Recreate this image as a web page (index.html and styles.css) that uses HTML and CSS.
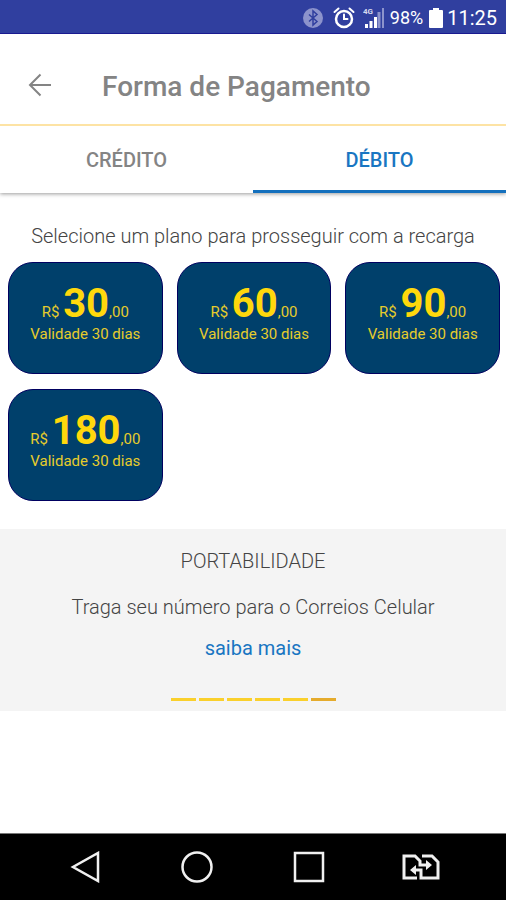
FILE: index.html
```html
<!DOCTYPE html>
<html lang="pt-BR">
<head>
    <meta charset="UTF-8">
    <meta name="viewport" content="width=device-width, initial-scale=1.0">
    <title>Forma de Pagamento</title>
    <link rel="stylesheet" href="styles.css">
</head>
<body>
    <div class="status-bar">
        <svg class="status-bt" width="22" height="22" viewBox="0 0 22 22">
            <circle cx="11" cy="11" r="10" fill="#8c93cc"/>
            <path d="M7 7.5l8 7-4 3.5V4l4 3.5-8 7" fill="none" stroke="#303f9f" stroke-width="1.5"/>
        </svg>
        <svg class="status-alarm" width="22" height="22" viewBox="0 0 22 22" fill="none" stroke="#fff" stroke-width="2.5" stroke-linecap="round">
            <circle cx="11" cy="12" r="8"/>
            <path d="M1.5 5l4-3.5M20.5 5l-4-3.5M11 7.5V12h3.5" stroke-width="2"/>
        </svg>
        <svg class="status-signal" width="22" height="22" viewBox="0 0 22 22">
            <text class="signal-text" x="0" y="7">4G</text>
            <path d="M2 17h3v4H2zM6.500 14h3v7h-3zM11 10h3v11h-3z" fill="#fff"/>
            <path d="M14.500 5h3v16h-3zM19 1h2v20h-2z" fill="#8c93cc"/>
        </svg>
        <span class="battery-level">98%</span>
        <svg class="status-battery" width="14" height="20" viewBox="0 0 14 20" fill="#fff">
            <path d="M4 0h6v2h3q1 0 1 1v16q0 1-1 1H1q-1 0-1-1V3q0-1 1-1h3z"/>
        </svg>
        <span class="clock">11:25</span>
    </div>

    <header class="header">
        <button class="back-btn" aria-label="Voltar">
            <svg width="24" height="24" viewBox="0 0 24 24" fill="none" stroke="#848484" stroke-width="2">
                <path d="M23 12H2M12.500 1.500L2 12l10.500 10.500"/>
            </svg>
        </button>
        <h1>Forma de Pagamento</h1>
    </header>

    <nav class="tabs">
        <button class="tab">CRÉDITO</button>
        <button class="tab active">DÉBITO</button>
    </nav>

    <main class="content">
        <p class="intro">Selecione um plano para prosseguir com a recarga</p>
        <div class="plans">
            <button class="plan">
                <span class="price">R$ <b>30</b>,00</span>
                <span class="validity">Validade 30 dias</span>
            </button>
            <button class="plan">
                <span class="price">R$ <b>60</b>,00</span>
                <span class="validity">Validade 30 dias</span>
            </button>
            <button class="plan">
                <span class="price">R$ <b>90</b>,00</span>
                <span class="validity">Validade 30 dias</span>
            </button>
            <button class="plan">
                <span class="price">R$ <b>180</b>,00</span>
                <span class="validity">Validade 30 dias</span>
            </button>
        </div>

        <section class="banner">
            <h2>PORTABILIDADE</h2>
            <p>Traga seu número para o Correios Celular</p>
            <a href="#">saiba mais</a>
            <div class="pager">
                <span></span>
                <span></span>
                <span></span>
                <span></span>
                <span></span>
                <span class="current"></span>
            </div>
        </section>
    </main>

    <footer class="nav-bar">
        <button class="nav-btn" aria-label="Voltar">
            <svg width="32" height="32" viewBox="0 0 32 32"><path d="M29 2v28L4 16z"/></svg>
        </button>
        <button class="nav-btn" aria-label="Início">
            <svg width="32" height="32" viewBox="0 0 32 32"><circle cx="16" cy="16" r="14.500"/></svg>
        </button>
        <button class="nav-btn" aria-label="Recentes">
            <svg width="32" height="32" viewBox="0 0 32 32"><path d="M2 2h28v28H2z"/></svg>
        </button>
        <button class="nav-btn" aria-label="Trocar chip">
            <svg class="sim-icon" width="40" height="28" viewBox="0 0 40 28">
                <path d="M16 25H3V3h11l5 5v4h7M21 3h10l6 6v16H20v-8h-7"/>
                <path class="arrow-head" d="M25 7l6 5-6 5zM15 12l-6 5 6 5z"/>
            </svg>
        </button>
    </footer>
</body>
</html>
```

FILE: styles.css
```css
* { box-sizing: border-box; }

body {
    margin: 0;
    min-height: 100vh;
    display: flex;
    flex-direction: column;
    background: #fff;
    color: #444;
    font-family: Roboto, "Liberation Sans", sans-serif;
}
button {
    padding: 0;
    border: none;
    background: none;
    font-family: inherit;
    cursor: pointer;
}
h1, h2, p { margin: 0; font-weight: 300; }
svg { display: block; }

/* status bar */
.status-bar {
    height: 34px;
    padding: 2px 9px 0 0;
    display: flex;
    justify-content: flex-end;
    align-items: center;
    background: #303f9f;
    border-bottom: 1px solid #1a1a90;
    color: #fff;
    font-size: 20px;
}
.status-alarm { margin-left: 9px; }
.status-signal { margin-left: 8px; }
.signal-text { fill: #d5d8ee; font-size: 8px; font-weight: 700; }
.battery-level { margin-left: 5px; font-size: 18px; }
.status-battery { margin: 0 4px 0 6px; }

/* header */
.header {
    height: 92px;
    padding: 12px 28px 0;
    display: flex;
    align-items: center;
    gap: 50px;
    border-bottom: 2px solid #fde3a4;
}
.header h1 {
    padding-top: 4px;
    color: #848484;
    font-size: 28px;
    line-height: 36px;
    font-weight: 500;
}

/* tabs */
.tabs {
    height: 67px;
    display: flex;
    box-shadow: 0 1px 4px rgba(0, 0, 0, 0.4);
    clip-path: inset(0 0 -8px 0);
}
.tab {
    flex: 1;
    padding-top: 4px;
    border-bottom: 3px solid transparent;
    color: #848484;
    font-size: 20px;
    font-weight: 500;
}
.tab.active { color: #1976c2; border-bottom-color: #1470bd; }

/* plans */
.content { flex: 1; }
.intro {
    margin-top: 31px;
    font-size: 20px;
    line-height: 24px;
    text-align: center;
}
.plans {
    padding: 14px 6px 28px 8px;
    display: grid;
    grid-template-columns: repeat(3, 1fr);
    gap: 15px 14px;
}
.plan {
    height: 112px;
    padding-top: 20px;
    display: flex;
    flex-direction: column;
    align-items: center;
    background: #00406b;
    border: 1px solid #000060;
    border-radius: 25px;
    color: #e6cc2c;
    font-size: 15px;
    line-height: 18px;
}
.price b {
    color: #ffd80c;
    font-size: 40px;
    line-height: 42px;
}

/* banner */
.banner {
    padding: 20px 0 10px;
    display: flex;
    flex-direction: column;
    align-items: center;
    background: #f4f4f4;
    font-size: 20px;
    line-height: 24px;
}
.banner h2 { font-size: 20px; }
.banner p { margin: 22px 0 17px; }
.banner a { color: #1976c2; text-decoration: none; }
.pager {
    margin-top: 38px;
    display: flex;
    gap: 3px;
}
.pager span { width: 25px; height: 3px; background: #fad02c; }
.pager .current { background: #e5ab2c; }

/* android buttons */
.nav-bar {
    height: 67px;
    padding: 0 29px;
    display: grid;
    grid-template-columns: repeat(4, 1fr);
    align-items: center;
    background: #000;
    border-top: 1px solid #777;
}
.nav-btn { display: flex; justify-content: center; }
.nav-btn svg { fill: none; stroke: #f0f0f0; stroke-width: 2.5; }
.nav-btn .sim-icon { stroke-width: 3; }
.nav-btn .arrow-head { fill: #f0f0f0; stroke: none; }
```
